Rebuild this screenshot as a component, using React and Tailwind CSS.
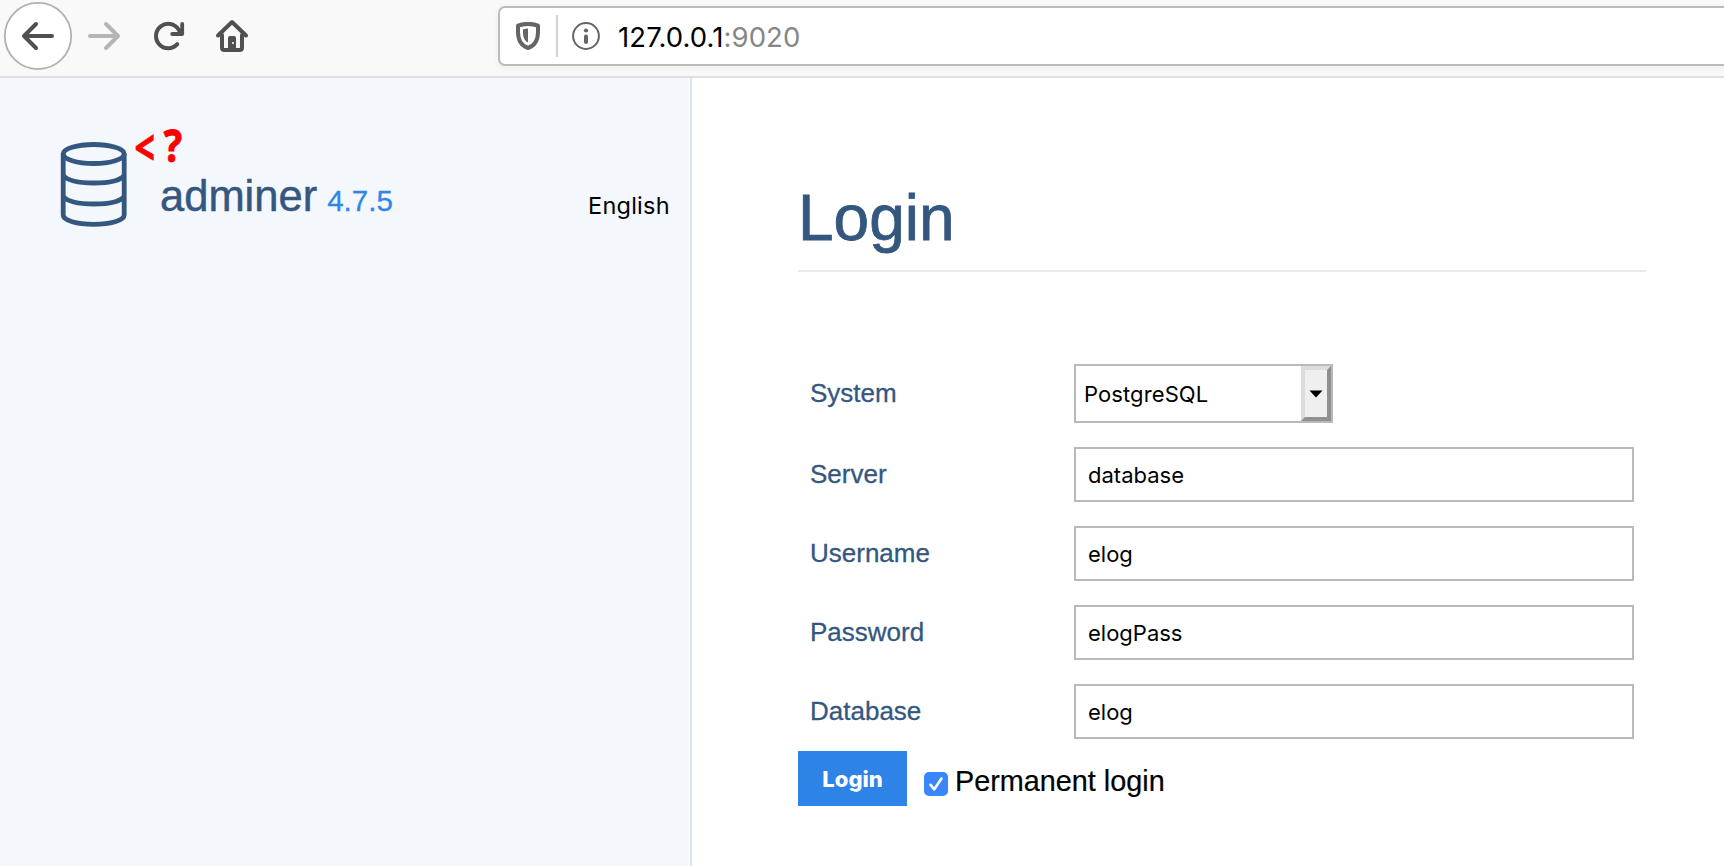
const fields = [
  { label: 'Server', value: 'database' },
  { label: 'Username', value: 'elog' },
  { label: 'Password', value: 'elogPass' },
  { label: 'Database', value: 'elog' },
];

function Toolbar() {
  return (
    <header className="flex h-[78px] shrink-0 items-start overflow-hidden border-b-2 border-[#e0e0e1] bg-[#f9f9fa]">
      <nav className="flex w-[498px] shrink-0">
        <svg width="260" height="74" viewBox="0 0 260 74" fill="none" strokeLinecap="round" strokeLinejoin="round">
          <circle cx="38" cy="36" r="33.2" fill="#fff" stroke="#b1b1b1" strokeWidth="1.8" />
          <path d="M52 36H24M36 24L24 36L36 48" stroke="#505051" strokeWidth="4" />
          <path d="M90 36H118M106 24L118 36L106 48" stroke="#b5b5b6" strokeWidth="4" />
          <path d="M177.3 44.2A12.2 12.2 0 1 1 178.5 29.5" stroke="#505051" strokeWidth="4" />
          <path d="M182.2 24V34H172.2" stroke="#505051" strokeWidth="3.8" />
          <path d="M182 27V34H175Z" fill="#505051" />
          <path d="M218 35.5L232 22L246 35.5" stroke="#505051" strokeWidth="4" />
          <path d="M222 35V47.5Q222 50 224.500 50H239.500Q242 50 242 47.500V35" stroke="#505051" strokeWidth="4" />
          <path d="M228 50V38Q228 36 230 36H234Q236 36 236 38V50Z" fill="#505051" />
          <circle cx="233" cy="43" r="1.1" fill="#f9f9fa" />
        </svg>
      </nav>
      <div className="mt-[6px] flex h-[60px] w-[1240px] shrink-0 items-center rounded-[7px] border-2 border-[#bbbbbc] bg-white shadow-[0_2px_8px_rgba(0,0,0,0.05)]">
        <svg className="ml-[16px]" width="24" height="28" viewBox="0 0 24 28">
          <path d="M12 1.900C15.500 1.900 19 2.600 22 3.700V10C22 18.500 18.500 23.800 12 26C5.500 23.800 2 18.500 2 10V3.700C5 2.600 8.500 1.900 12 1.900Z" fill="#fff" stroke="#656566" strokeWidth="4" strokeLinejoin="round" />
          <path d="M12 6.500C10 6.600 8.500 6.900 7 7.400V11C7 15.500 8.500 18.800 12 20.500Z" fill="#656566" />
        </svg>
        <div className="ml-[16px] h-[42px] w-[2px] bg-[#d2d2d3]" />
        <svg className="ml-[14px]" width="28" height="28" viewBox="0 0 28 28">
          <circle cx="14" cy="14" r="12.900" fill="none" stroke="#656566" strokeWidth="2" />
          <circle cx="14" cy="8.500" r="2.100" fill="#656566" />
          <rect x="12" y="12.500" width="4" height="9.500" rx="2" fill="#656566" />
        </svg>
        <span className="ml-[18px] mt-[2px] font-['Inter',sans-serif] text-[27.500px] leading-[40px] tracking-[0.1px] text-black">
          127.0.0.1<span className="text-[#868686]">:9020</span>
        </span>
      </div>
    </header>
  );
}

function Logo() {
  return (
    <svg className="shrink-0 overflow-visible" width="130" height="120" viewBox="56 112 130 120">
      <g fill="none" stroke="#34577f" strokeWidth="4.800">
        <ellipse cx="93.700" cy="154" rx="30.500" ry="9.500" />
        <path d="M63.200 153.500V215C63.200 220.500 77 224.300 93.700 224.300S124.200 220.500 124.200 215V153.500" />
        <path d="M63.200 175.500C68 181 80 183 93.700 183S120 181 124.200 175.500" />
        <path d="M63.200 196.500C68 202 80 204 93.700 204S120 202 124.200 196.500" />
      </g>
      <text transform="translate(134.500 165) scale(0.81 1.08)" className="font-['Open_Sans',sans-serif] text-[44px] font-bold" fill="#f00" stroke="#f00" strokeWidth="0.8">&lt;</text>
      <text transform="translate(163.800 161.500) scale(0.84 0.98)" className="font-['Open_Sans',sans-serif] text-[46px] font-bold" fill="#f00" stroke="#f00" strokeWidth="1">?</text>
    </svg>
  );
}

function Sidebar() {
  return (
    <aside className="flex w-[692px] shrink-0 border-r-2 border-[#d8e5f7] bg-[#fafcff] pr-[2px]">
      <div className="flex w-[688px] items-start bg-[#f4f7fc] pl-[56px] pt-[34px]">
        <Logo />
        <div className="-ml-[26px] mt-[59px] flex w-[400px] items-baseline leading-[50px]">
          <span className="text-[43.500px] text-[#34577f] [-webkit-text-stroke:0.5px_#34577f]">adminer</span>
          <span className="ml-[10px] text-[29.500px] text-[#2e86e8] [-webkit-text-stroke:0.3px_#2e86e8]">4.7.5</span>
        </div>
        <span className="ml-[28px] mt-[78px] font-['Inter',sans-serif] text-[23.500px] leading-[32px] tracking-[0.25px] text-black">English</span>
      </div>
    </aside>
  );
}

function LoginForm() {
  return (
    <main className="w-[954px] pl-[106px] pt-[100px]">
      <h1 className="h-[94px] border-b-2 border-[#e9e9e9] text-[64px] leading-[80px] text-[#34577f] [-webkit-text-stroke:0.8px_#34577f]">Login</h1>
      <form className="pt-[92px]">
        <div className="flex flex-col gap-[24px] pl-[12px]">
          <div className="flex h-[59px] items-center">
            <label className="w-[264px] text-[26px] text-[#34577f] [-webkit-text-stroke:0.3px_#34577f]">System</label>
            <div className="flex h-[59px] w-[259px] items-center justify-between border-2 border-[#b9b9b9] pl-[8px]">
              <span className="pt-[2px] font-['Inter',sans-serif] text-[22px] tracking-[0.1px] text-black">PostgreSQL</span>
              <div className="flex h-[55px] w-[30px] items-center justify-center border-4 border-b-[#909090] border-l-[#dcdcdc] border-r-[#909090] border-t-[#dcdcdc] bg-[#efefef]">
                <svg width="14" height="8" viewBox="0 0 14 8"><path d="M0.500 0.500H13.500L7 7.500Z" fill="#000" /></svg>
              </div>
            </div>
          </div>
          {fields.map((f) => (
            <div key={f.label} className="flex h-[55px] items-center">
              <label className="w-[264px] text-[26px] text-[#34577f] [-webkit-text-stroke:0.3px_#34577f]">{f.label}</label>
              <input
                readOnly
                value={f.value}
                className="h-[55px] w-[560px] rounded-none border-2 border-[#b9b9b9] bg-white pl-[12px] font-['Inter',sans-serif] text-[22px] text-black outline-none"
              />
            </div>
          ))}
        </div>
        <div className="mt-[12px] flex items-center">
          <button type="button" className="h-[55px] w-[109px] bg-[#2e84e6] pt-[1px] font-['Inter',sans-serif] text-[22px] font-extrabold text-white">Login</button>
          <svg className="ml-[17px] mt-[11px]" width="24" height="24" viewBox="0 0 24 24">
            <rect width="24" height="24" rx="5" fill="#3a86fb" />
            <path d="M6.500 12.800L10.300 17.300L17.500 6.500" fill="none" stroke="#fff" strokeWidth="2.600" strokeLinecap="round" strokeLinejoin="round" />
          </svg>
          <span className="ml-[7px] mt-[5px] text-[28.800px] leading-[36px] text-black [-webkit-text-stroke:0.2px_#000]">Permanent login</span>
        </div>
      </form>
    </main>
  );
}

export default function App() {
  return (
    <div className="flex h-[866px] w-[1724px] flex-col overflow-hidden bg-white font-['Liberation_Sans',sans-serif]">
      <Toolbar />
      <div className="flex flex-1">
        <Sidebar />
        <LoginForm />
      </div>
    </div>
  );
}
